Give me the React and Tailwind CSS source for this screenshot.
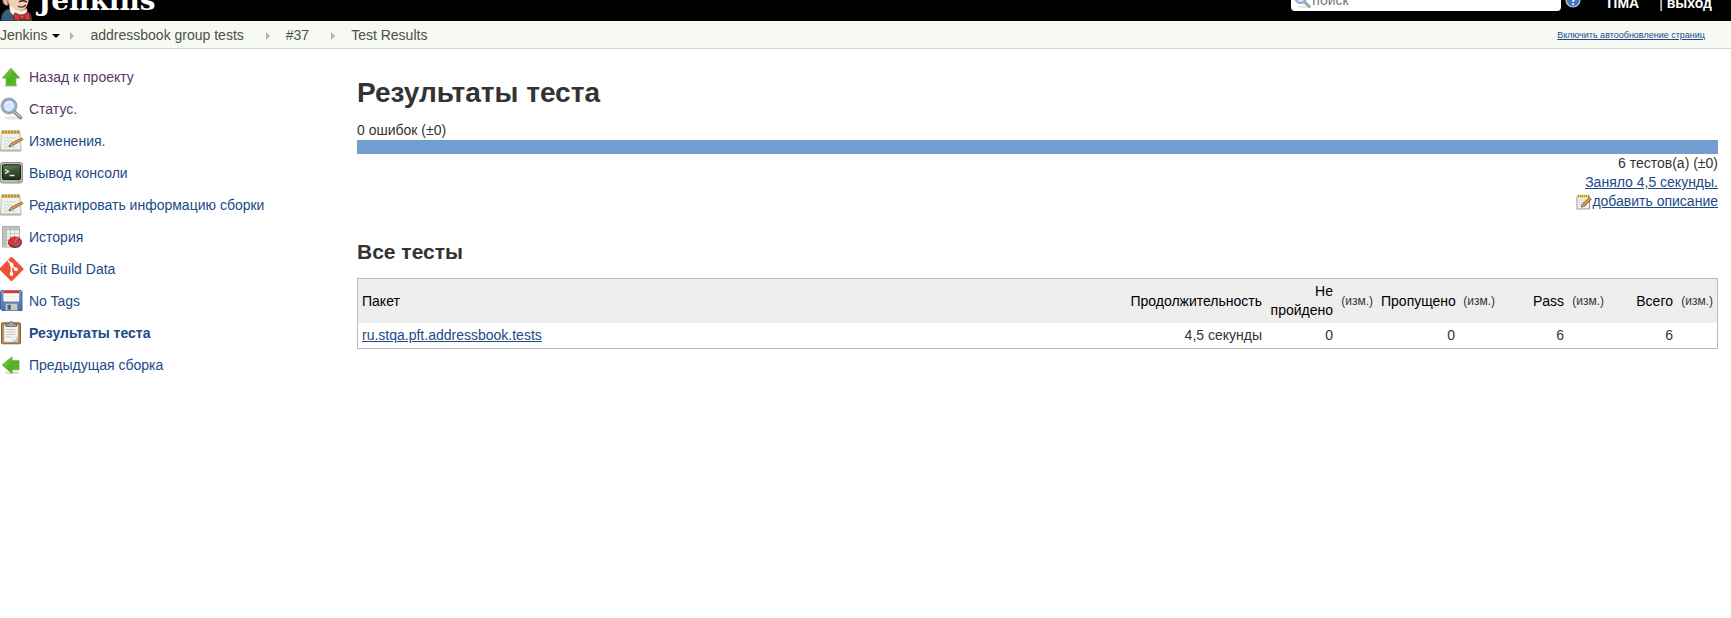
import React from "react";

const Butler = () => (
  <svg className="h-[48px] w-[32px] shrink-0" viewBox="0 0 32 48" aria-hidden="true">
    <path d="M3 14C3 4 9 0 17 0s13 6 13 15-1 15-4 19l-8 3-9-5C5 27 3 22 3 14z" fill="#efd0b5" stroke="#3b2a20" strokeWidth="1" />
    <path d="M3 16C0 6 8-1 17 0c5 0 9 3 11 6-7 0-14 0-17 6l-2 9-3 1z" fill="#2e1c14" />
    <path d="M4 24c-2 1-2 6 1 8l3 1V24z" fill="#e0b89a" stroke="#3b2a20" strokeWidth=".7" />
    <path d="M1 48c0-6 2-10 7-12l10 5 10-3c3 3 4 6 4 10z" fill="#3a5f78" stroke="#1b2b36" strokeWidth=".8" />
    <path d="M9 31l1 8 8 9 9-8 0-5-6 3z" fill="#f7f2ea" stroke="#6c5a50" strokeWidth=".6" />
    <path d="M8 26c1 7 7 12 12 12 4 0 7-4 8-9l1-7H11z" fill="#efd0b5" />
    <path d="M18 33c3 2 6 1 8-1" stroke="#5a2c1e" strokeWidth="1.300" fill="none" />
    <path d="M19 29c2-1.500 5-1.500 8 0" stroke="#3b2116" strokeWidth="1.400" fill="none" />
    <path d="M15 40l7 3 6-4c3 2 3 7 1 9l-7-3-6 3c-3-2-3-6-1-8z" fill="#d33833" stroke="#5d1512" strokeWidth=".8" />
    <circle cx="22" cy="44" r="2.400" fill="#ef3d3a" stroke="#5d1512" strokeWidth=".7" />
  </svg>
);

const Svg = ({ children }) => (
  <svg className="size-6 shrink-0" viewBox="0 0 24 24" aria-hidden="true">{children}</svg>
);

const Defs = () => (
  <svg className="absolute size-0" aria-hidden="true">
    <defs>
      <linearGradient id="green" x1="0" y1="0" x2="1" y2="1">
        <stop offset="0" stopColor="#7fd63a" /><stop offset=".55" stopColor="#4fb024" /><stop offset="1" stopColor="#6cc62a" />
      </linearGradient>
      <linearGradient id="lens" x1="0" y1="0" x2="1" y2="1">
        <stop offset="0" stopColor="#b4cff0" /><stop offset=".6" stopColor="#dceafb" /><stop offset="1" stopColor="#a9c8ee" />
      </linearGradient>
      <linearGradient id="screen" x1="0" y1="0" x2="0" y2="1">
        <stop offset="0" stopColor="#4c6a45" /><stop offset="1" stopColor="#1c3018" />
      </linearGradient>
      <linearGradient id="disk" x1="0" y1="0" x2="0" y2="1">
        <stop offset="0" stopColor="#7a9ccb" /><stop offset="1" stopColor="#4a70ab" />
      </linearGradient>
    </defs>
  </svg>
);

const UpArrow = () => (
  <Svg>
    <ellipse cx="11" cy="20.500" rx="7.500" ry="1.800" fill="#d9dcd6" />
    <path d="M11 3.300L19.700 13H15.800V20.300H6.200V13H2.300z" fill="url(#green)" stroke="#5aa52e" strokeWidth=".8" strokeLinejoin="round" />
  </Svg>
);

const LeftArrow = () => (
  <Svg>
    <ellipse cx="12" cy="19.700" rx="7.500" ry="1.600" fill="#d9dcd6" />
    <path d="M2.300 12L12 3.800V7.700H19V16.700H12V20.500z" fill="url(#green)" stroke="#5aa52e" strokeWidth=".8" strokeLinejoin="round" />
  </Svg>
);

const Magnifier = () => (
  <Svg>
    <ellipse cx="13" cy="21" rx="9" ry="1.600" fill="#e4e6e3" />
    <path d="M14.500 15l6 5.500" stroke="#777a76" strokeWidth="3.600" strokeLinecap="round" />
    <path d="M14.800 15l5.700 5.200" stroke="#c3c6c1" strokeWidth="1.600" strokeLinecap="round" />
    <circle cx="9" cy="9" r="7.700" fill="url(#lens)" stroke="#a0a4a2" strokeWidth="1.400" />
    <circle cx="9" cy="9" r="6.300" fill="none" stroke="#6f9bd6" strokeWidth="1.200" />
    <path d="M5 8.500C6 5.500 9 4.500 12 5.500" stroke="#fff" strokeWidth="1.400" fill="none" opacity=".8" />
  </Svg>
);

const notepadParts = (
  <>
    <path d="M1.500 3h18.500l1 19H.4z" fill="#f1f1ee" stroke="#b4b6af" strokeWidth=".9" />
    <path d="M.5 20.500h20.500v1.800H.4z" fill="#b4b6b1" />
    <path d="M1.500 1.500h18.500v3.300h-18.500z" fill="#d3bc5e" />
    <path d="M3 1v3.500M6 1v3.500M9 1v3.500M12 1v3.500M15 1v3.500M18 1v3.500" stroke="#8b7727" strokeWidth=".9" />
    <path d="M4 9h12M4 12h8M4 15h5M4 18h11" stroke="#d0d2cd" strokeWidth="1" />
    <path d="M9 17.300l2.300-3.200L21 9.200c1.800-.5 2.400 1 1.200 1.900L12.600 16.600z" fill="#d69a45" stroke="#8c6228" strokeWidth=".8" />
    <path d="M9 17.300l2.300-3.200 1.300 2.500z" fill="#ead9b6" stroke="#705833" strokeWidth=".5" />
    <path d="M9 17.300l1-1.400.7 1z" fill="#333" />
  </>
);
const Notepad = () => <Svg>{notepadParts}</Svg>;

const EditNote = () => (
  <svg className="size-4" viewBox="0 0 16 16" aria-hidden="true">
    <path d="M1 2.500h12.500v12.500H1z" fill="#f4f4f1" stroke="#8d8f89" strokeWidth=".9" />
    <path d="M1 1h12.500v2.500H1z" fill="#e6cc45" />
    <path d="M2.500.8v2.600M4.500.8v2.600M6.500.8v2.600M8.500.8v2.600M10.500.8v2.600M12.500.8v2.600" stroke="#9a8420" strokeWidth=".7" />
    <path d="M3 6h7M3 8.500h5M3 11h2.500" stroke="#bfc1bc" strokeWidth=".8" />
    <path d="M5.500 13l1-3 6.800-6.500 2 1.800-6.600 6.700z" fill="#d69a45" stroke="#6e4a17" strokeWidth=".8" />
    <path d="M5.500 13l1-3 2.200 2z" fill="#ead9b6" stroke="#5a4526" strokeWidth=".5" />
  </svg>
);

const Terminal = () => (
  <Svg>
    <rect x=".5" y="1.500" width="22" height="20.500" rx="2.500" fill="#b9bbb5" stroke="#868881" strokeWidth=".9" />
    <rect x="2.500" y="3.800" width="18" height="14.700" rx="1" fill="url(#screen)" stroke="#172414" strokeWidth="1" />
    <path d="M5 8.500l3.500 2-3.500 2.200M9.500 14.500h5" stroke="#e4f0de" strokeWidth="1.400" fill="none" />
    <path d="M3 4.500h17L4 12z" fill="#fff" opacity=".1" />
    <path d="M17 20.300h3" stroke="#6fbf3a" strokeWidth="1" />
  </Svg>
);

const History = () => (
  <Svg>
    <path d="M2.500 1.500h17v20.500h-17z" fill="#f3f3f1" stroke="#a2a49f" strokeWidth=".9" />
    <path d="M3 2h16v3H3zM3 2h3.500v19.500H3z" fill="#bfc1bc" />
    <path d="M6.500 5v16.500M10.500 2v19.500M14.500 2v19.500M3 5h16M3 8.500h16M3 12h16M3 15.500h16M3 19h16" stroke="#b4b7b1" strokeWidth=".7" />
    <ellipse cx="15" cy="18.300" rx="6.700" ry="4.600" fill="#8f1515" />
    <ellipse cx="15" cy="16.800" rx="6.700" ry="4.900" fill="#d93434" stroke="#a31d1d" strokeWidth=".6" />
    <path d="M15 17l-.5 4.700c2.500 0 4.500-.7 5.700-2.200z" fill="#4b73b3" />
    <path d="M15 17l2.500-4.500" stroke="#f6a3a3" strokeWidth=".7" />
  </Svg>
);

const Git = () => (
  <Svg>
    <path d="M10.400.5a1.500 1.500 0 0 1 2.200 0L23 10.900a1.500 1.500 0 0 1 0 2.200L12.600 23.500a1.500 1.500 0 0 1-2.200 0L0 13.100a1.500 1.500 0 0 1 0-2.200z" fill="#f05033" />
    <path d="M7.900 3.500L11.500 7.500v9.500M11.500 8l4.300 4.300" stroke="#fff" strokeWidth="1.600" fill="none" />
    <circle cx="11.500" cy="7.500" r="1.900" fill="#fff" />
    <circle cx="11.500" cy="17" r="1.900" fill="#fff" />
    <circle cx="16" cy="12.300" r="1.900" fill="#fff" />
  </Svg>
);

const Floppy = () => (
  <Svg>
    <path d="M1.500 1.500h19.500l1 1V21.500H2L.5 20V2.500z" fill="url(#disk)" stroke="#34588f" strokeWidth=".9" />
    <path d="M3.500 1.500h15.500v11H3.500z" fill="#fbfbfa" />
    <path d="M3.500 1.500h15.500v2.700H3.500z" fill="#e33030" />
    <path d="M5.500 7.500h11.500M5.500 10h11.500" stroke="#e6e8e5" strokeWidth=".8" />
    <path d="M5.500 14.500h12v7h-12z" fill="#c6c9c4" stroke="#7f8692" strokeWidth=".6" />
    <path d="M7.500 15.800h3.300v5H7.500z" fill="#3e629c" />
  </Svg>
);

const Clipboard = () => (
  <Svg>
    <rect x="1.500" y="1.800" width="19" height="21" rx="1" fill="#b18a52" stroke="#77572a" strokeWidth=".9" />
    <path d="M4 4.500h14v16.500H4z" fill="#f4f4f2" stroke="#bcbdb8" strokeWidth=".5" />
    <path d="M6 8.500h9.500M6 11h9.500M6 13.500h9.500M6 16h5.500" stroke="#c3c5c0" strokeWidth=".9" />
    <path d="M13 21l5-5v5z" fill="#c7c9c4" />
    <path d="M13 21l.5-4.500L18 16z" fill="#fff" stroke="#aaa" strokeWidth=".4" />
    <path d="M6 3h3c0-3.500 4.500-3.500 4.500 0h3v2.500H6z" fill="#a4a69f" stroke="#5f615c" strokeWidth=".8" />
  </Svg>
);

const Help = () => (
  <svg className="mb-[13px] ml-1 size-4 shrink-0" viewBox="0 0 16 16" aria-hidden="true">
    <circle cx="8" cy="8" r="7" fill="#4778b8" stroke="#b9cbe3" strokeWidth="1.200" />
    <path d="M5.700 6c0-3.200 5-3 4.700 0C10.300 7.500 8 7.700 8 9.800M8 11.300v1.800" stroke="#fff" strokeWidth="1.700" fill="none" />
  </svg>
);

const links = [
  ["Назад к проекту", UpArrow, "text-[#5c3566]"],
  ["Статус.", Magnifier, "text-[#5c3566]"],
  ["Изменения.", Notepad, "text-[#204a87]"],
  ["Вывод консоли", Terminal, "text-[#204a87]"],
  ["Редактировать информацию сборки", Notepad, "text-[#204a87]"],
  ["История", History, "text-[#204a87]"],
  ["Git Build Data", Git, "text-[#204a87]"],
  ["No Tags", Floppy, "text-[#204a87]"],
  ["Результаты теста", Clipboard, "font-bold text-[#204a87]"],
  ["Предыдущая сборка", LeftArrow, "text-[#204a87]"],
];

const Separator = ({ className }) => (
  <svg className={"mr-4 h-2 w-1 " + className} viewBox="0 0 4 8" aria-hidden="true"><path d="M0 0l4 4-4 4z" fill="#b0b3ad" /></svg>
);

const Diff = () => <th className="px-1 py-[3px] text-right text-xs font-normal text-[#333]">(изм.)</th>;
const Head = ({ children }) => <th className="px-1 py-[3px] text-right font-normal">{children}</th>;
const Num = ({ children }) => <td className="px-1 py-[3px] text-right">{children}</td>;

export default function App() {
  return (
    <div className="font-['Liberation_Sans',Arial,sans-serif] text-[14px] leading-[19px] text-[#333]">
      <Defs />
      <header className="flex h-[21px] items-end overflow-hidden bg-black text-white">
        <a href="#home" className="flex items-end gap-[6px]">
          <Butler />
          <span className="mb-1 font-['DejaVu_Serif',serif] text-[28px] leading-8 font-bold">Jenkins</span>
        </a>
        <div className="ml-auto flex items-end">
          <label className="mb-[10px] flex h-[26px] w-[270px] items-center rounded bg-white pt-1 pl-[3px]">
            <span className="flex size-[18px] items-center justify-center [&>svg]:size-[18px]"><Magnifier /></span>
            <input aria-label="поиск" placeholder="поиск" className="min-w-0 flex-1 bg-transparent text-[14px] outline-none placeholder:text-[#777]" />
          </label>
          <Help />
          <a href="#user" className="mb-2 ml-[26px] font-bold">ПМА</a>
          <span className="mr-[19px] mb-2 ml-5 font-bold"><span className="font-normal">| </span><a href="#logout">выход</a></span>
        </div>
      </header>

      <nav className="flex h-7 items-center border-b border-[#d3d7cf] bg-[#f6faf2] pt-0.5 text-[#4d4f4b]">
        <a href="#jenkins">Jenkins</a>
        <svg className="ml-[5px] h-1 w-2" viewBox="0 0 8 4" aria-hidden="true"><path d="M0 0h8L4 4z" fill="#000" /></svg>
        <Separator className="ml-[10px]" />
        <a href="#job">addressbook group tests</a>
        <Separator className="ml-[22px]" />
        <a href="#build">#37</a>
        <Separator className="ml-[22px]" />
        <a href="#results">Test Results</a>
        <a href="#refresh" className="mr-[26px] ml-auto text-[9px] text-[#204a87] underline">Включить автообновление страниц</a>
      </nav>

      <div className="flex">
        <aside className="w-[357px] shrink-0 pt-3">
          {links.map(([label, Icon, tone]) => (
            <a key={label} href="#task" className={"flex h-8 items-center gap-[5px] " + tone}>
              <Icon />
              {label}
            </a>
          ))}
        </aside>

        <main className="min-w-0 flex-1 pt-7 pr-[13px]">
          <h1 className="text-[28px] leading-8 font-bold">Результаты теста</h1>
          <div className="mt-3">0 ошибок (±0)</div>
          <div className="h-[14px] bg-[#729fcf]" />
          <div className="flex flex-col items-end">
            <div>6 тестов(а) (±0)</div>
            <a href="#duration" className="text-[#204a87] underline">Заняло 4,5 секунды.</a>
            <a href="#description" className="flex items-center text-[#204a87] underline">
              <EditNote />
              добавить описание
            </a>
          </div>
          <h2 className="mt-[29px] text-[21px] leading-6 font-bold">Все тесты</h2>
          <table className="mt-[14px] w-full table-fixed border-separate border-spacing-0 border border-[#bbb]">
            <colgroup>
              <col />
              <col className="w-[140px]" />
              <col className="w-[71px]" />
              <col className="w-[40px]" />
              <col className="w-[82px]" />
              <col className="w-[40px]" />
              <col className="w-[69px]" />
              <col className="w-[40px]" />
              <col className="w-[69px]" />
              <col className="w-[40px]" />
            </colgroup>
            <thead className="bg-[#eee] text-black">
              <tr>
                <th className="px-1 py-[3px] text-left font-normal">Пакет</th>
                <Head>Продолжительность</Head>
                <Head>Не пройдено</Head><Diff />
                <Head>Пропущено</Head><Diff />
                <Head>Pass</Head><Diff />
                <Head>Всего</Head><Diff />
              </tr>
            </thead>
            <tbody>
              <tr>
                <td className="px-1 py-[3px]"><a href="#package" className="text-[#204a87] underline">ru.stqa.pft.addressbook.tests</a></td>
                <Num>4,5 секунды</Num>
                <Num>0</Num><td />
                <Num>0</Num><td />
                <Num>6</Num><td />
                <Num>6</Num><td />
              </tr>
            </tbody>
          </table>
        </main>
      </div>
    </div>
  );
}
